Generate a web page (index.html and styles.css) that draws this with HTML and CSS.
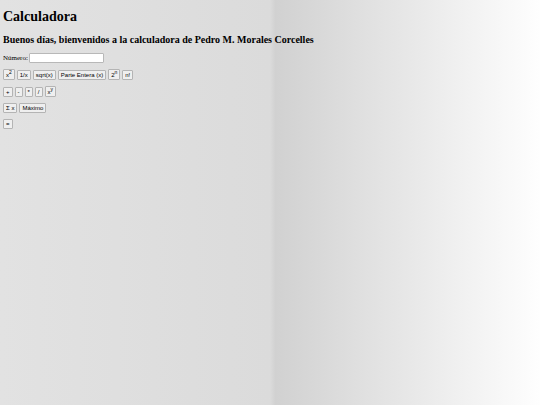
FILE: index.html
```html
<!DOCTYPE html>
<html lang="es">

<head>
    <meta charset="UTF-8">
    <meta name="viewport" content="width=device-width, initial-scale=1.0">
    <title>Calculadora</title>
    <link rel="stylesheet" href="styles.css">
</head>

<body>
    <h1>Calculadora</h1>
    <h2>Buenos días, bienvenidos a la calculadora de Pedro M. Morales Corcelles</h2>

    <div class="numero">
        <label for="numero">Número:</label>
        <input type="text" id="numero">
    </div>

    <!-- Operaciones unitarias -->
    <div class="fila">
        <button type="button" class="potencia">x<sup>2</sup></button>
        <button type="button">1/x</button>
        <button type="button">sqrt(x)</button>
        <button type="button">Parte Entera (x)</button>
        <button type="button" class="potencia">2<sup>n</sup></button>
        <button type="button">n!</button>
    </div>

    <!-- Operaciones binarias -->
    <div class="fila">
        <button type="button">+</button>
        <button type="button">-</button>
        <button type="button">*</button>
        <button type="button">/</button>
        <button type="button" class="potencia">x<sup>y</sup></button>
    </div>

    <!-- Operaciones con listas -->
    <div class="fila">
        <button type="button">Σ x</button>
        <button type="button">Máximo</button>
    </div>

    <div class="fila">
        <button type="button">=</button>
    </div>
</body>

</html>
```

FILE: styles.css
```css
html {
    min-height: 100%;
    background: linear-gradient(to right, #e2e2e2 0%, #dbdbdb 50%, #d1d1d1 51%, #fefefe 100%);
}

body {
    margin: 9px 3px;
    font-family: "Liberation Serif", "Times New Roman", serif;
    font-size: 7px;
    line-height: 8px;
}

h1 {
    margin: 0 0 9px;
    font-size: 14px;
    line-height: 16px;
}

h2 {
    margin: 0 0 8px;
    font-size: 10px;
    line-height: 11px;
}

.numero {
    display: flex;
    align-items: center;
    gap: 1px;
    margin-bottom: 6px;
}

input {
    box-sizing: border-box;
    width: 75px;
    height: 10px;
    padding: 0 1px;
    border: 1px solid #b8b8b8;
    border-radius: 1px;
    background-color: #fff;
    font-size: 6px;
}

.fila {
    display: flex;
    align-items: flex-end;
    gap: 2px;
    margin-bottom: 6px;
}

button {
    padding: 0 2px;
    border: 1px solid #b4b4b4;
    border-radius: 1px;
    background-color: #efefef;
    color: #000;
    font-family: "Liberation Sans", Arial, sans-serif;
    font-size: 6px;
    line-height: 8px;
}

.potencia {
    padding-top: 1px;
}

sup {
    font-size: 5px;
    line-height: 0;
}
```
